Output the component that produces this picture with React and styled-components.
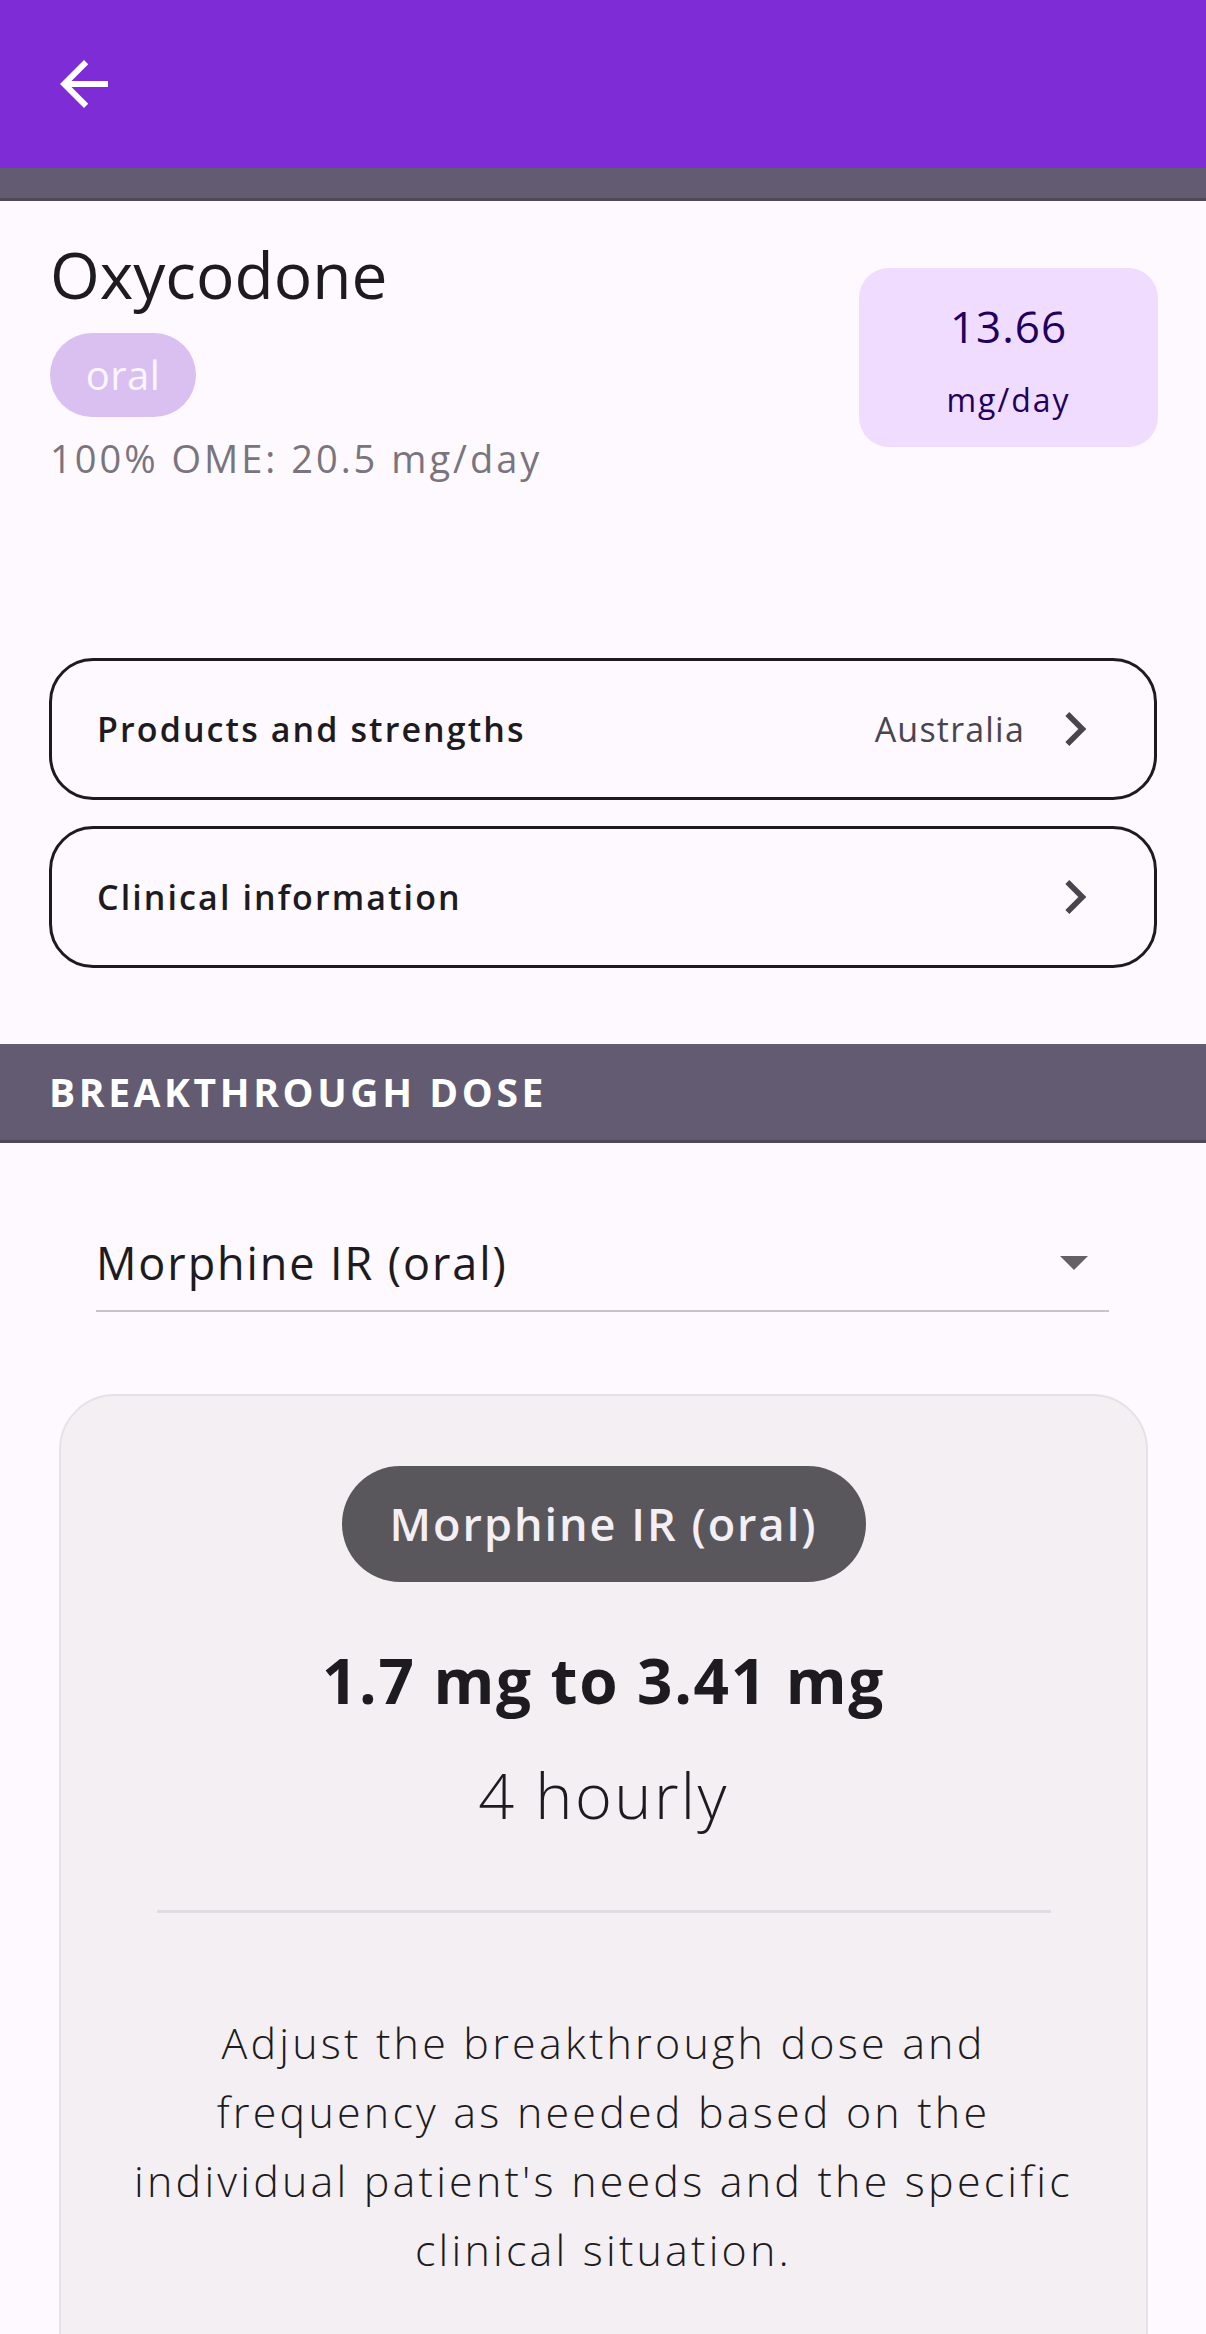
import React from 'react';
import styled, { createGlobalStyle } from 'styled-components';

const GlobalStyle = createGlobalStyle`
  html, body {
    margin: 0;
    padding: 0;
    background: #fdf9fe;
  }
  body {
    font-family: "Open Sans", "Noto Sans", sans-serif;
    color: #1d1b20;
  }
  * {
    box-sizing: border-box;
  }
`;

const Page = styled.div`
  width: 1206px;
  height: 2334px;
  overflow: hidden;
  background: #fdf9fe;
`;

const AppBar = styled.header`
  height: 168px;
  background: #7e2cd5;
  display: flex;
  align-items: center;
  padding-left: 48px;
`;

const BackButton = styled.button`
  width: 72px;
  height: 72px;
  padding: 0;
  border: none;
  background: transparent;
  display: flex;
  align-items: center;
  justify-content: center;
  color: #ffffff;
`;

const HiddenHeader = styled.div`
  height: 33px;
  background: #625b71;
  border-bottom: 3px solid #4e4858;
`;

const Summary = styled.section`
  display: flex;
  justify-content: space-between;
  align-items: flex-start;
  padding: 34px 48px 0 50px;
`;

const DrugColumn = styled.div`
  display: flex;
  flex-direction: column;
  align-items: flex-start;
`;

const DrugName = styled.h1`
  margin: 0;
  font-size: 64px;
  line-height: 80px;
  font-weight: 400;
  color: #1d1b20;
`;

const RoutePill = styled.span`
  margin-top: 18px;
  height: 84px;
  width: 146px;
  border-radius: 42px;
  background: #d9c0f0;
  color: #fbf5fe;
  display: flex;
  align-items: center;
  justify-content: center;
  font-size: 40px;
  line-height: 48px;
  font-weight: 400;
  letter-spacing: 0.5px;
`;

const OmeText = styled.p`
  margin: 17px 0 0;
  font-size: 38px;
  line-height: 48px;
  color: #79747e;
  letter-spacing: 3px;
  font-weight: 400;
`;

const DoseBox = styled.div`
  margin-top: 33px;
  width: 299px;
  height: 179px;
  border-radius: 30px;
  background: #efdcfe;
  color: #21005d;
  display: flex;
  flex-direction: column;
  align-items: center;
  padding-top: 32px;
`;

const DoseValue = styled.span`
  font-size: 44px;
  line-height: 52px;
  letter-spacing: 1px;
`;

const DoseUnit = styled.span`
  margin-top: 28px;
  font-size: 32px;
  line-height: 40px;
  letter-spacing: 2px;
`;

const LinkList = styled.div`
  display: flex;
  flex-direction: column;
  gap: 26px;
  padding: 0 49px;
  margin-top: 176px;
`;

const LinkCard = styled.button`
  height: 142px;
  width: 100%;
  border: 3px solid #1d1b20;
  border-radius: 44px;
  background: transparent;
  display: flex;
  align-items: center;
  padding: 0 45px 0 45px;
  font-family: inherit;
  cursor: pointer;
`;

const LinkLabel = styled.span`
  flex: 1;
  text-align: left;
  font-size: 34px;
  line-height: 44px;
  font-weight: 600;
  letter-spacing: 2.1px;
  color: #1d1b20;
`;

const LinkValue = styled.span`
  font-size: 34px;
  line-height: 44px;
  font-weight: 400;
  letter-spacing: 1.2px;
  color: #49454f;
  margin-right: 16px;
`;

const SectionHeader = styled.h2`
  margin: 76px 0 0;
  height: 99px;
  background: #625b71;
  border-bottom: 3px solid #4e4858;
  display: flex;
  align-items: center;
  padding-left: 49px;
  color: #ffffff;
  font-size: 39px;
  line-height: 48px;
  font-weight: 700;
  letter-spacing: 3.6px;
`;

const SelectField = styled.div`
  margin: 92px 97px 0 96px;
  padding-bottom: 19px;
  border-bottom: 2px solid #c6c3c9;
  display: flex;
  align-items: center;
  justify-content: space-between;
`;

const SelectValue = styled.span`
  font-size: 45px;
  line-height: 56px;
  letter-spacing: 1.9px;
  color: #1d1b20;
`;

const Caret = styled.span`
  width: 0;
  height: 0;
  margin-right: 21px;
  border-left: 14.5px solid transparent;
  border-right: 14.5px solid transparent;
  border-top: 14px solid #646166;
`;

const ResultCard = styled.div`
  margin: 82px 58px 0 59px;
  min-height: 1000px;
  border: 2px solid #e6e1e6;
  border-radius: 56px;
  background: #f3eff3;
  display: flex;
  flex-direction: column;
  align-items: center;
  padding-top: 70px;
`;

const DrugChip = styled.span`
  height: 116px;
  min-width: 524px;
  padding: 0 44px;
  border-radius: 58px;
  background: #5a575c;
  color: #f3eff4;
  display: flex;
  align-items: center;
  justify-content: center;
  font-size: 45px;
  line-height: 56px;
  font-weight: 600;
  letter-spacing: 2px;
`;

const DoseRange = styled.div`
  margin-top: 62px;
  font-size: 62px;
  line-height: 72px;
  font-weight: 700;
  letter-spacing: 1.7px;
  color: #1d1b20;
`;

const Frequency = styled.div`
  margin-top: 41px;
  font-size: 63px;
  line-height: 76px;
  font-weight: 300;
  letter-spacing: 2.4px;
  color: #1d1b20;
`;

const Divider = styled.hr`
  margin: 77px 0 0;
  width: 894px;
  height: 3px;
  border: none;
  background: #e0dce1;
`;

const Advice = styled.p`
  margin: 95px 0 0;
  max-width: 968px;
  text-align: center;
  font-size: 43px;
  line-height: 69px;
  font-weight: 300;
  letter-spacing: 3.2px;
  color: #1d1b20;
`;

const ArrowBack = () => (
  <svg width="72" height="72" viewBox="0 0 24 24" fill="currentColor">
    <path d="M20 11H7.83l5.59-5.59L12 4l-8 8 8 8 1.41-1.41L7.83 13H20v-2z" />
  </svg>
);

const Chevron = () => (
  <svg width="68" height="68" viewBox="0 0 24 24" fill="#49454f">
    <path d="M10 6L8.59 7.41 13.17 12l-4.58 4.59L10 18l6-6z" />
  </svg>
);

const links = [
  { label: 'Products and strengths', value: 'Australia' },
  { label: 'Clinical information', value: null },
];

export default function App() {
  return (
    <Page>
      <GlobalStyle />
      <AppBar>
        <BackButton aria-label="Back">
          <ArrowBack />
        </BackButton>
      </AppBar>
      <HiddenHeader />

      <Summary>
        <DrugColumn>
          <DrugName>Oxycodone</DrugName>
          <RoutePill>oral</RoutePill>
          <OmeText>100% OME: 20.5 mg/day</OmeText>
        </DrugColumn>
        <DoseBox>
          <DoseValue>13.66</DoseValue>
          <DoseUnit>mg/day</DoseUnit>
        </DoseBox>
      </Summary>

      <LinkList>
        {links.map((link) => (
          <LinkCard key={link.label}>
            <LinkLabel>{link.label}</LinkLabel>
            {link.value && <LinkValue>{link.value}</LinkValue>}
            <Chevron />
          </LinkCard>
        ))}
      </LinkList>

      <SectionHeader>BREAKTHROUGH DOSE</SectionHeader>

      <SelectField>
        <SelectValue>Morphine IR (oral)</SelectValue>
        <Caret />
      </SelectField>

      <ResultCard>
        <DrugChip>Morphine IR (oral)</DrugChip>
        <DoseRange>1.7 mg to 3.41 mg</DoseRange>
        <Frequency>4 hourly</Frequency>
        <Divider />
        <Advice>
          Adjust the breakthrough dose and frequency as needed based on the
          individual patient's needs and the specific clinical situation.
        </Advice>
      </ResultCard>
    </Page>
  );
}
